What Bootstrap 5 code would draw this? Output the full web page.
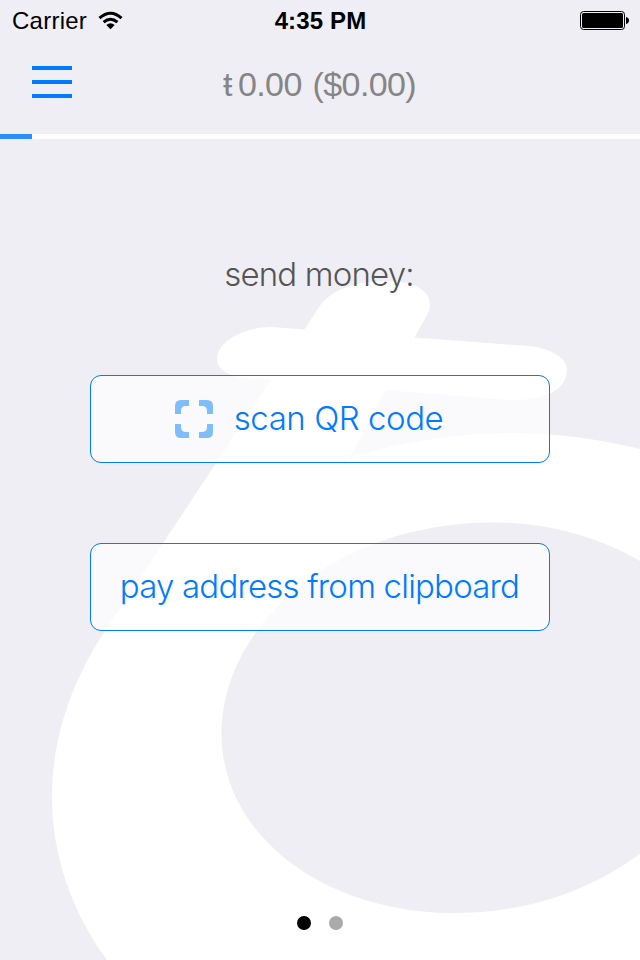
<!DOCTYPE html>
<html lang="en">
<head>
<meta charset="utf-8">
<meta name="viewport" content="width=device-width, initial-scale=1">
<title>Wallet</title>
<link href="https://cdn.jsdelivr.net/npm/bootstrap@5.3.0/dist/css/bootstrap.min.css" rel="stylesheet">
<style>
body{background:#efeef4;font-family:"Liberation Sans",Arial,sans-serif;color:#000}
.screen{width:640px;height:960px}
.backdrop{left:0;top:0;z-index:0}
.screen>*:not(.backdrop){position:relative;z-index:1}
.status{height:40px;padding:1px 11px 0 12px;font-size:24px;line-height:42px}
.status .side{flex:1 1 0}
.clock{font-weight:700;font-size:24px;letter-spacing:.15px}
.carrier{letter-spacing:.25px}
.wifi{margin-left:10px}
.titlebar{height:94px;padding:0 32px 10px}
.balance{font-size:34px;line-height:40px;color:#858585;letter-spacing:-.6px;word-spacing:2px;padding-right:1px;margin-bottom:-4px}
.sync{height:5px;border-radius:0;background:#fdfdfd}
.sync .progress-bar{background:#2b8eff}
.light-text{font-family:Inter,"Liberation Sans",sans-serif;font-weight:300;font-size:33px;line-height:40px}
.prompt{color:#555;margin-top:115px;margin-bottom:1px;letter-spacing:-.85px;padding-right:2px}
.action{width:460px;height:88px;border:1px solid #007aff;border-radius:11px;background:rgba(255,255,255,.7);color:#007aff;padding:0}
.action:hover{border-color:#007aff;color:#007aff;background:#fff}
.scan{margin-top:80px;padding:0 22px 2px 0}
.scan svg{margin:2px 21px 0 0}
.scan span{letter-spacing:-.45px}
.pay{margin-top:80px;letter-spacing:-.8px;padding:0 1px 2px 0}
.pager{gap:18px;padding-bottom:30px}
.pager i{width:14px;height:14px;background:#aaa}
.pager i.current{background:#000}
</style>
</head>
<body>
<main class="screen d-flex flex-column position-relative overflow-hidden">
  <svg class="backdrop position-absolute" width="640" height="960" viewBox="0 0 640 960" aria-hidden="true">
    <path fill="#fff" fill-rule="evenodd" d="M304.500 329.500L319 307C331 289 358 281 386 281C416 281 430 291 430 305Q430 309 427 315L414.500 337.500L528 346C551 348 567 358 567 370C567 389 546 400 515 400Q504 400 490 398.500L386 390L349.500 458C390 445 450 433 510 433Q575 433 640 449V960H107C70 909 52 853 52 797C52 741 70 685 103 634L271 380L240 377C226 375 217 368 217 359C217 342 243 327 272 327Z M221.500 733C221.500 840 330 913 453 913C530 913 590 890 640 854V561C600 538 550 522.500 493 522.500C330 522.500 221.500 630 221.500 733Z"/>
  </svg>
  <header class="status d-flex align-items-center">
    <div class="side d-flex align-items-center">
      <span class="carrier">Carrier</span>
      <svg class="wifi" width="27" height="20" viewBox="0 0 27 20" aria-label="Wi-Fi">
        <g fill="none" stroke="#000"><path stroke-width="3" d="M2.500 7.200Q13.500-2.800 24.500 7.200"/><path stroke-width="3" d="M6.600 11.200Q13.500 5.200 20.400 11.200"/></g>
        <path d="M9.300 14.100Q13.500 10.300 17.700 14.100L13.500 18.300Z"/>
      </svg>
    </div>
    <div class="clock">4:35 PM</div>
    <div class="side d-flex justify-content-end">
      <svg width="50" height="20" viewBox="0 0 50 20" aria-label="Battery full">
        <rect x="1.500" y=".5" width="44" height="18" rx="3" fill="none" stroke="#000"/>
        <rect x="3" y="2" width="41" height="15" rx="1.500"/><path d="M47 6q3 .6 3 3.500t-3 3.500z"/>
      </svg>
    </div>
  </header>
  <nav class="titlebar d-flex align-items-center">
    <svg width="40" height="32" viewBox="0 0 40 32" aria-label="Menu"><path fill="#007aff" d="M0 0h40v4H0zM0 14h40v4H0zM0 28h40v4H0z"/></svg>
    <div class="balance flex-fill text-center">ŧ&#8201;0.00 ($0.00)</div>
    <span style="width:40px"></span>
  </nav>
  <div class="progress sync"><div class="progress-bar" style="width:5%"></div></div>
  <section class="d-flex flex-column align-items-center">
    <div class="prompt light-text">send money:</div>
    <button class="btn action scan light-text d-flex align-items-center justify-content-center">
      <svg width="38" height="38" viewBox="0 0 38 38" aria-hidden="true"><path fill="#80bdff" d="M0 14V6Q0 0 6 0H14V6H11Q6 6 6 11V14ZM24 0H32Q38 0 38 6V14H32V11Q32 6 27 6H24ZM38 24V32Q38 38 32 38H24V32H27Q32 32 32 27V24ZM14 38H6Q0 38 0 32V24H6V27Q6 32 11 32H14Z"/></svg>
      <span>scan QR code</span>
    </button>
    <button class="btn action pay light-text">pay address from clipboard</button>
  </section>
  <footer class="pager d-flex justify-content-center mt-auto">
    <i class="rounded-circle current"></i><i class="rounded-circle"></i>
  </footer>
</main>
<script src="https://cdn.jsdelivr.net/npm/bootstrap@5.3.0/dist/js/bootstrap.bundle.min.js"></script>
</body>
</html>
